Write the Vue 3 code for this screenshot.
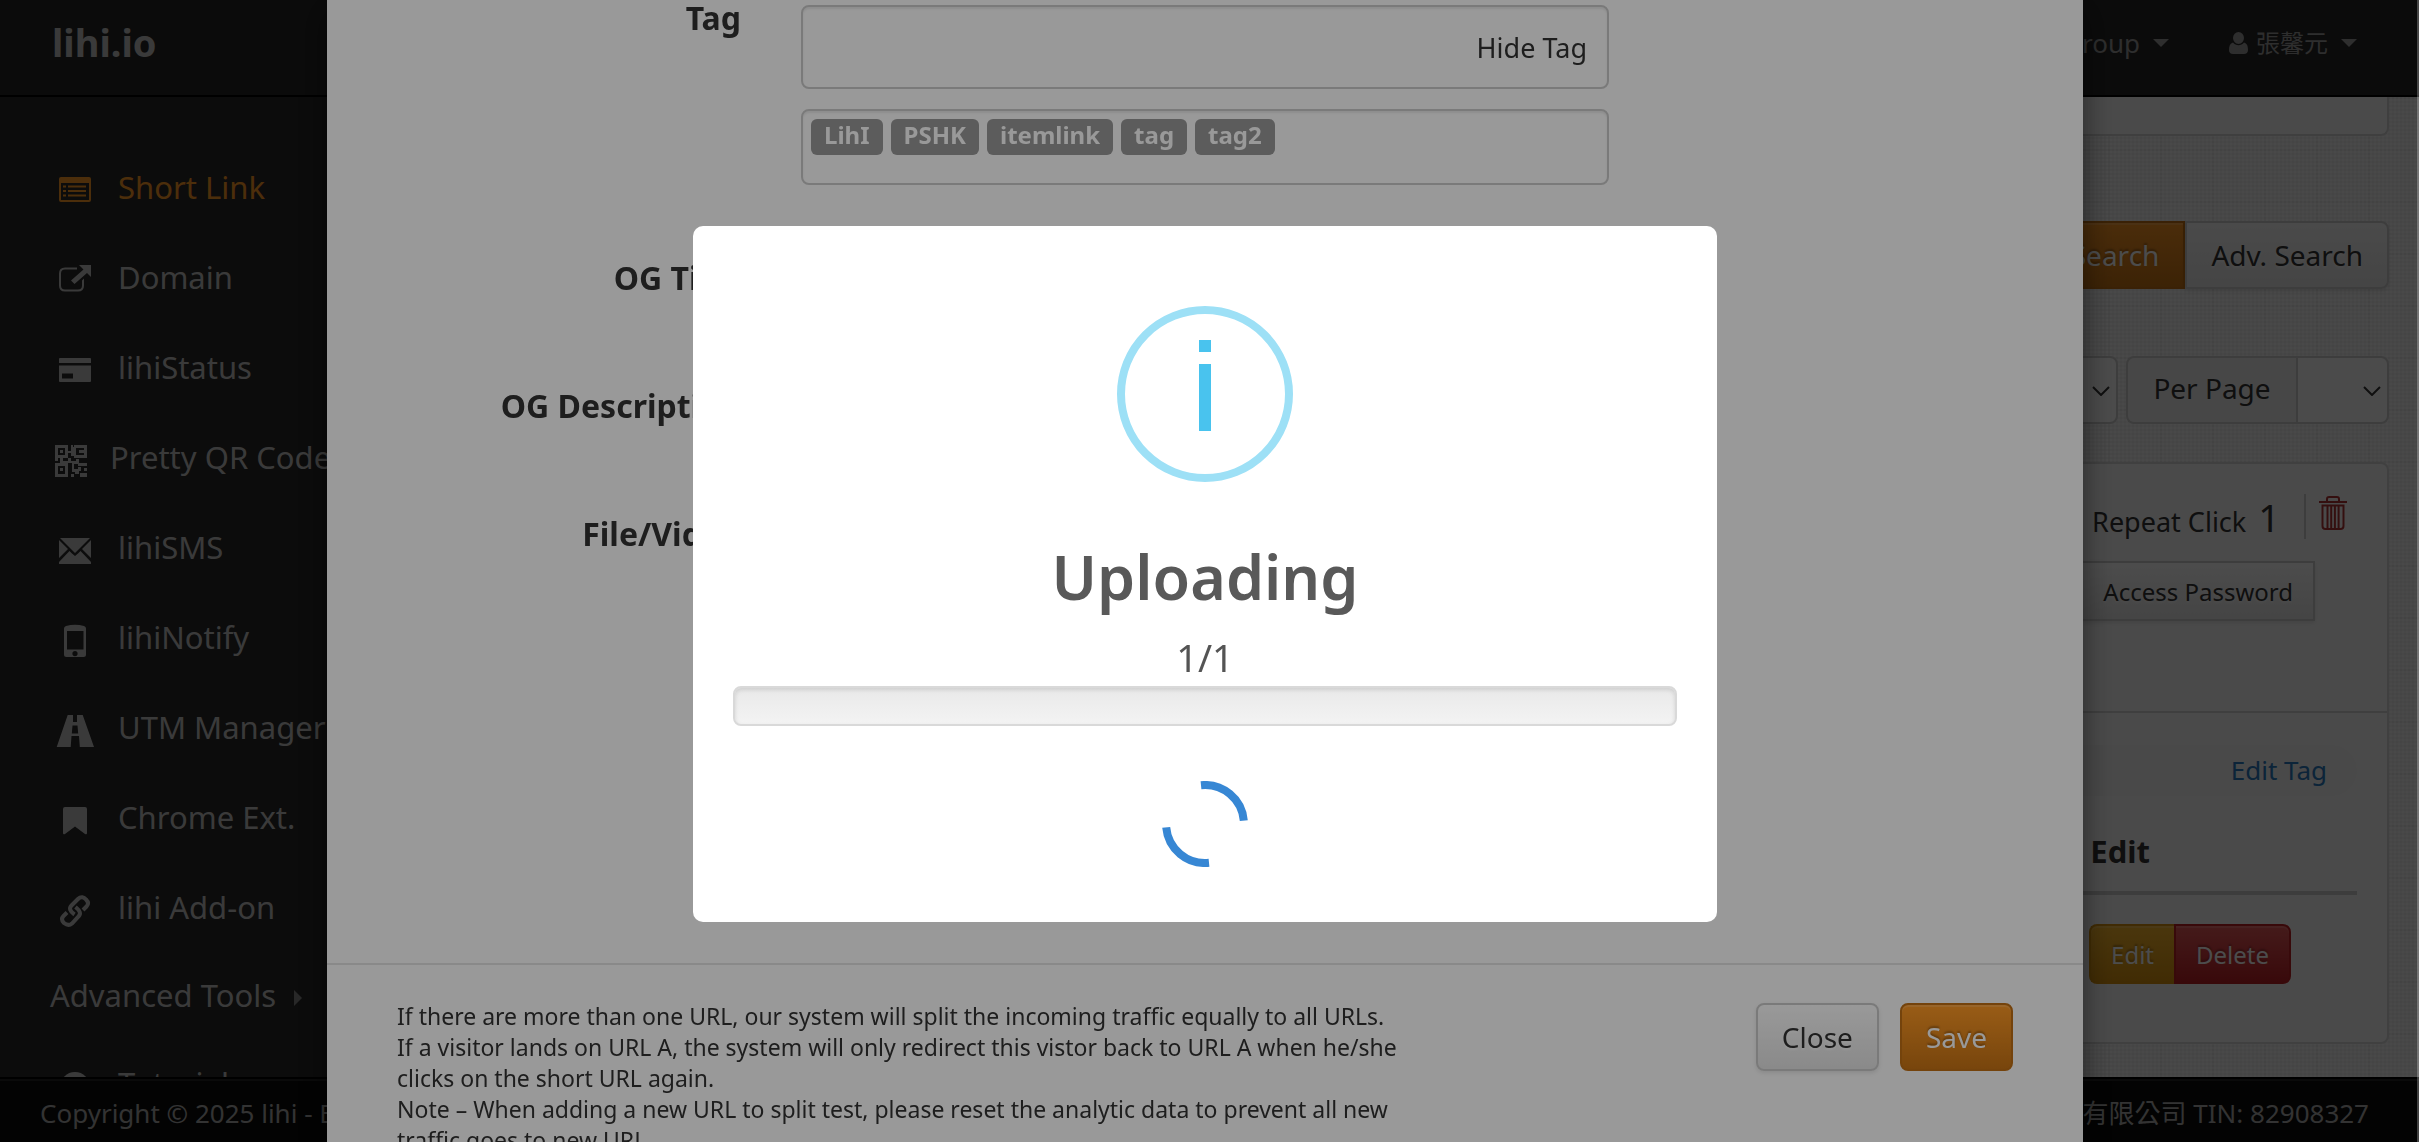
<template>
  <div class="page">
    <header class="topbar">
      <a class="brand" href="#">lihi.io</a>
      <nav class="topnav">
        <a href="#">Group <span class="caret"></span></a>
        <a href="#">
          <svg class="user-icon" viewBox="0 0 19 22"><path d="M9.500 0a5.500 6 0 0 1 0 12a5.500 6 0 0 1 0-12zM4 10.500c1.500 2 3.500 2.700 5.500 2.700s4-.7 5.500-2.700c3 .8 4 3.500 4 7.500c0 2.500-1.500 4-4 4H4c-2.500 0-4-1.500-4-4c0-4 1-6.700 4-7.500z" /></svg>
          張馨元 <span class="caret"></span>
        </a>
      </nav>
    </header>

    <div class="body">
      <aside class="sidebar">
        <a v-for="item in menu" :key="item.name" href="#" class="menu-item" :class="{ active: item.active, wide: item.icon === 'qr' }">
          <span class="menu-icon">
            <svg viewBox="0 0 32 32" width="32" height="32" :class="{ outline: item.icon === 'link' }">
              <path :d="icons[item.icon]" fill-rule="evenodd" />
            </svg>
          </span>
          {{ item.name }}
        </a>
        <a href="#" class="menu-group">Advanced Tools <span class="arrow"></span></a>
        <a href="#" class="menu-item tutorial">
          <span class="menu-icon">
            <svg viewBox="0 0 32 32" width="32" height="32"><circle cx="16" cy="18" r="15" /></svg>
          </span>
          Tutorial
        </a>
      </aside>

      <main class="content">
        <div class="panel-end"></div>
        <div class="search-row">
          <button type="button" class="btn btn-orange">Search</button>
          <button type="button" class="btn btn-right">Adv. Search</button>
        </div>
        <div class="filter-row">
          <div class="select-box">
            <select aria-label="Order"><option></option></select>
            <svg class="chevron" viewBox="0 0 18 10"><path d="M1 1l8 8l8-8" /></svg>
          </div>
          <div class="per-page">
            <label for="perPage">Per Page</label>
            <div class="select-box">
              <select id="perPage"><option></option></select>
              <svg class="chevron" viewBox="0 0 18 10"><path d="M1 1l8 8l8-8" /></svg>
            </div>
          </div>
        </div>
        <section class="card">
          <div class="card-head">
            <div class="clicks">
              <span>Repeat Click</span>
              <span class="count">1</span>
              <button type="button" class="trash" aria-label="Delete link">
                <svg viewBox="0 0 28 34" width="28" height="34">
                  <path d="M0 6h28M8 6V3q0-2 2-2h8q2 0 2 2v3M3.500 9.500h21V30q0 3-3 3h-15q-3 0-3-3zM8.500 10v22M12.200 10v22M15.900 10v22M19.600 10v22" />
                </svg>
              </button>
            </div>
            <button type="button" class="btn btn-small btn-square">Access Password</button>
          </div>
          <div class="card-body">
            <div class="tag-bar"><a href="#">Edit Tag</a></div>
            <h4>Edit</h4>
            <div class="actions">
              <button type="button" class="btn btn-small btn-yellow">Edit</button>
              <button type="button" class="btn btn-small btn-red">Delete</button>
            </div>
          </div>
        </section>
      </main>
    </div>

    <footer class="footer">
      <span>Copyright © 2025 lihi - B</span>
      <span>份有限公司 TIN: 82908327</span>
    </footer>

    <div class="backdrop"></div>

    <!-- link form -->
    <div class="layer">
      <div class="modal">
        <div class="form">
          <div class="form-row tag-row">
            <label for="tags">Tag</label>
            <div class="field">
              <div class="tag-input">
                <input id="tags" type="text" />
                <button type="button" class="hide-tag">Hide Tag</button>
              </div>
              <div class="tag-list">
                <span v-for="tag in tags" :key="tag" class="tag">{{ tag }}</span>
              </div>
            </div>
          </div>
          <div v-for="label in labels" :key="label" class="form-row">
            <span class="label">{{ label }}</span>
          </div>
        </div>
        <div class="modal-footer">
          <p>
            If there are more than one URL, our system will split the incoming traffic equally to all URLs.<br />
            If a visitor lands on URL A, the system will only redirect this vistor back to URL A when he/she<br />
            clicks on the short URL again.<br />
            Note – When adding a new URL to split test, please reset the analytic data to prevent all new<br />
            traffic goes to new URL.
          </p>
          <div class="modal-buttons">
            <button type="button" class="btn">Close</button>
            <button type="button" class="btn btn-orange">Save</button>
          </div>
        </div>
      </div>
    </div>

    <!-- upload progress -->
    <div class="layer dim">
      <div class="alert" role="dialog" aria-labelledby="alertTitle">
        <svg class="info" viewBox="0 0 176 176">
          <circle cx="88" cy="88" r="84" />
          <path d="M82 34h12v12H82zM82 58h12v67H82z" />
        </svg>
        <h2 id="alertTitle">Uploading</h2>
        <div class="progress-text">{{ done }}/{{ total }}</div>
        <div class="progress"></div>
        <svg class="spinner" viewBox="0 0 86 86">
          <path d="M39 4.200A39 39 0 0 1 81.800 39.600M47 81.800A39 39 0 0 1 4.200 46.400" />
        </svg>
      </div>
    </div>
  </div>
</template>

<script setup>
import { ref } from 'vue'

const done = ref(1)
const total = ref(1)

const tags = ref(['LihI', 'PSHK', 'itemlink', 'tag', 'tag2'])
const labels = ['OG Title', 'OG Description', 'File/Video']

const menu = [
  { name: 'Short Link', icon: 'list', active: true },
  { name: 'Domain', icon: 'share' },
  { name: 'lihiStatus', icon: 'card' },
  { name: 'Pretty QR Code', icon: 'qr' },
  { name: 'lihiSMS', icon: 'mail' },
  { name: 'lihiNotify', icon: 'phone' },
  { name: 'UTM Manager', icon: 'road' },
  { name: 'Chrome Ext.', icon: 'bookmark' },
  { name: 'lihi Add-on', icon: 'link' },
]

const icons = {
  list: 'M2 4h28q2 0 2 2v21q0 2-2 2H2q-2 0-2-2V6q0-2 2-2zM2 10v17h28V10zM4 12.500h3v2H4zM9 12.500h18v2H9zM4 17h3v2H4zM9 17h18v2H9zM4 21.500h3v2H4zM9 21.500h18v2H9z',
  share: 'M20 2h12v12l-4-4L15.500 21l-3.500-3.500L24.500 6.500zM6 4.500h12v2H6q-4 0-4 4v12q0 4 4 4h13q4 0 4-4v-5l2-2v7q0 6-6 6H6q-6 0-6-6v-12q0-6 6-6z',
  card: 'M1 5h30q1 0 1 1v4H0V6q0-1 1-1zM0 12.500h32v15.500q0 1-1 1H1q-1 0-1-1zM3 20.500v5h11v-5z',
  qr: 'M0 2h13v13H3v3H0zM3 5v7h7V5zM5 7h3v3H5zM16 2h2v2h1V2h13v13H19v-2h-3v-3h-3V8h3zM21 5v7h8V5zM24 7h5v3h-5zM0 20h13v14H0zM3 23v8h7v-8zM5 25h3v3H5zM5 15h3v3h5v-3h3v3h5v-2h3v4h8v3h-9v-2h-4v5h4v-2h3v4h-2v3h-4v-2h-3v-9H5zM29 25h3v3h-3zM25 30h7v4h-7zM16 31h3v3h-3z',
  mail: 'M1 5h30L16 20zM0 7l9 9l-9 9zM32 7l-9 9l9 9zM10.500 18L13 20.500l3 2.500l3-2.500l2.500-2.500L32 29v2H0v-2z',
  phone: 'M7 3q9-2.500 18 0q2 .5 2 2.500v26q0 2.500-2.500 2.500h-17Q5 34 5 31.500v-26Q5 3.500 7 3zM8 8v18.500h16.500V8zM16 28a2.600 2.600 0 0 0 0 5.200a2.600 2.600 0 0 0 0-5.200z',
  road: 'M8.700 2h5.300v7h4V2h5.700l11.300 32h-14.200l-.8-11h-7.500l-.8 11H-2.300zM13.500 12.500l-.7 8h6.400l-.7-8z',
  bookmark: 'M6 4h20q2 0 2 2v24q0 2-2 1L16 23.500L6 31q-2 1-2-1V6q0-2 2-2z',
  link: 'M15.500 21.500C10.500 18 10 15 12.500 12.500L19 6C22 3 25 4 27 6.500C29.500 9 29.500 11.500 27.500 13.500L24 17M16.500 14C21.500 18 22 21 19.500 23.500L13 30.500C10 33 7.500 32 5 30C2.500 27.500 2.500 25 4.500 23L8 19.500',
}
</script>

<style>
body {
  margin: 0;
  overflow: hidden;
}
</style>

<style scoped>
* {
  box-sizing: border-box;
}

.page {
  display: flex;
  flex-direction: column;
  height: 100vh;
  overflow: hidden;
  background: #f4f4f4;
  color: #333;
  font-family: "Noto Sans", "Noto Sans CJK TC", sans-serif;
  font-size: 28px;
}

a {
  color: inherit;
  text-decoration: none;
  white-space: nowrap;
}

button,
input,
select {
  font: inherit;
  color: inherit;
}

/* top bar */
.topbar {
  display: flex;
  flex: none;
  justify-content: space-between;
  height: 97px;
  padding: 0 62px 0 52px;
  background: #262626;
  border-bottom: 2px solid #000;
  color: #c4c4c4;
}

.brand {
  font-size: 38px;
  font-weight: bold;
  line-height: 84px;
}

.topnav {
  display: flex;
  gap: 60px;
  line-height: 86px;
  color: #999;
}

.topnav a {
  display: flex;
  align-items: center;
  gap: 8px;
  height: 86px;
  font-size: 24px;
}

.topnav a:first-child {
  font-size: 26px;
}

.user-icon {
  width: 19px;
  height: 22px;
  fill: currentColor;
}

.caret {
  margin-left: 5px;
  border: 8px solid transparent;
  border-top-color: currentColor;
  border-bottom: 0;
}

/* side menu */
.body {
  display: flex;
  flex: 1;
  min-height: 0;
}

.sidebar {
  flex: none;
  width: 340px;
  padding: 45px 0 0 50px;
  background: #282828;
  color: #c4c4c4;
  font-size: 31px;
  overflow: hidden;
}

.menu-item {
  display: flex;
  align-items: center;
  gap: 18px;
  height: 90px;
}

.menu-item.active {
  color: #ff9b26;
}

.menu-item.wide {
  gap: 10px;
}

.menu-icon {
  display: flex;
  justify-content: center;
  width: 50px;
  padding-top: 4px;
}

.wide .menu-icon {
  justify-content: flex-start;
  padding-left: 5px;
}

.menu-icon svg {
  fill: currentColor;
  overflow: visible;
}

.menu-icon svg.outline {
  fill: none;
  stroke: currentColor;
  stroke-width: 4;
}

.menu-group {
  display: flex;
  align-items: center;
  gap: 18px;
  height: 86px;
}

.arrow {
  margin-top: 6px;
  border: 8px solid transparent;
  border-left-color: #888;
  border-right: 0;
}

/* content */
.content {
  display: flex;
  flex: 1;
  flex-direction: column;
  min-width: 0;
  padding: 0 30px;
  background-color: #f6f6f6;
  background-image:
    linear-gradient(rgba(0, 0, 0, 0.02) 2px, transparent 2px),
    linear-gradient(90deg, rgba(0, 0, 0, 0.02) 2px, transparent 2px),
    linear-gradient(rgba(0, 0, 0, 0.03) 2px, transparent 2px),
    linear-gradient(90deg, rgba(0, 0, 0, 0.03) 2px, transparent 2px);
  background-size: 52px 52px, 52px 52px, 4px 4px, 4px 4px;
}

.panel-end {
  height: 39px;
  background: #f8f8f8;
  border: 2px solid #d4d4d4;
  border-top: 0;
  border-radius: 0 0 8px 8px;
}

.search-row {
  display: flex;
  justify-content: flex-end;
  margin-top: 85px;
}

.btn {
  height: 68px;
  padding: 0 24px;
  border: 2px solid #ccc;
  border-radius: 8px;
  background: linear-gradient(#fff, #e6e6e6);
  box-shadow: 0 2px 4px rgba(0, 0, 0, 0.1);
  font-size: 28px;
  text-shadow: 0 2px 2px rgba(255, 255, 255, 0.75);
  white-space: nowrap;
}

.btn-orange,
.btn-yellow,
.btn-red {
  color: #fff;
  text-shadow: 0 -2px 2px rgba(0, 0, 0, 0.3);
  box-shadow: inset 0 2px 0 rgba(255, 255, 255, 0.15);
}

.btn-orange {
  border-color: #c27014;
  background: linear-gradient(#ff9a26, #c87415);
}

.search-row .btn {
  background: linear-gradient(#f8f8f8, #e6e6e6);
}

.search-row .btn-orange {
  border-radius: 0;
  background: linear-gradient(#f99524, #c87415);
}

.search-row .btn-right {
  border-radius: 0 8px 8px 0;
}

.btn-small {
  height: 60px;
  padding: 0 20px;
  font-size: 24px;
}

.btn-square {
  border-radius: 0;
}

.btn-yellow {
  border-color: #d8920f;
  border-right: 0;
  border-radius: 8px 0 0 8px;
  background: linear-gradient(#f8b62c, #d8920f);
}

.btn-red {
  border-color: #bd1f24;
  border-radius: 0 8px 8px 0;
  background: linear-gradient(#e65a5a, #bd1f24);
}

.filter-row {
  display: flex;
  justify-content: flex-end;
  gap: 8px;
  margin-top: 67px;
}

.select-box {
  position: relative;
  width: 140px;
  height: 68px;
  background: #fcfcfc;
  border: 2px solid #ccc;
  border-radius: 8px;
}

.select-box select {
  width: 100%;
  height: 100%;
  appearance: none;
  background: none;
  border: 0;
}

.chevron {
  position: absolute;
  right: 6px;
  top: 28px;
  width: 18px;
  height: 10px;
  fill: none;
  stroke: #333;
  stroke-width: 2;
  pointer-events: none;
}

.per-page {
  display: flex;
}

.per-page label {
  width: 170px;
  background: #ededed;
  border: 2px solid #ccc;
  border-right: 0;
  border-radius: 8px 0 0 8px;
  line-height: 60px;
  text-align: center;
}

.per-page .select-box {
  width: 93px;
  border-radius: 0 8px 8px 0;
}

.card {
  height: 582px;
  margin-top: 38px;
  background: #f9f9f9;
  border: 2px solid #d6d6d6;
  border-radius: 8px;
}

.card-head {
  display: flex;
  flex-direction: column;
  align-items: flex-end;
  height: 249px;
  padding: 30px 40px 0 0;
  border-bottom: 2px solid #d4d4d4;
}

.clicks {
  display: flex;
  align-items: baseline;
  gap: 12px;
  height: 67px;
  font-size: 27px;
  line-height: 46px;
}

.count {
  font-size: 38px;
}

.trash {
  align-self: flex-start;
  height: 45px;
  margin-left: 12px;
  padding: 0 0 8px 13px;
  background: none;
  border: 0;
  border-left: 2px solid #ccc;
}

.trash svg {
  display: block;
  fill: none;
  stroke: #b03434;
  stroke-width: 2;
}

.card-head .btn {
  margin-right: 32px;
}

.card-body {
  padding: 32px 30px 0;
}

.tag-bar {
  height: 51px;
  padding-right: 30px;
  border-radius: 26px;
  background: #f5f5f5;
  color: #2a7abf;
  font-size: 26px;
  line-height: 51px;
  text-align: right;
}

.card-body h4 {
  height: 99px;
  margin: 0;
  padding: 34px 207px 0 0;
  border-bottom: 4px solid #ccc;
  font-size: 31px;
  line-height: 42px;
  text-align: right;
}

.actions {
  display: flex;
  justify-content: flex-end;
  padding: 29px 66px 0 0;
}

/* footer */
.footer {
  display: flex;
  flex: none;
  justify-content: space-between;
  height: 65px;
  padding: 0 50px 0 40px;
  background: #0a0a0a;
  border-top: 2px solid #000;
  box-shadow: inset 0 2px 0 #222;
  color: #aaa;
  font-size: 26px;
  line-height: 68px;
  white-space: nowrap;
}

/* overlays */
.backdrop,
.layer {
  position: fixed;
  inset: 0;
}

.backdrop {
  background: rgba(0, 0, 0, 0.5);
}

.layer {
  display: flex;
  justify-content: center;
  padding-right: 9px;
  overflow: hidden;
}

.dim {
  align-items: center;
  padding-right: 7px;
  border-right: 2px solid rgba(255, 255, 255, 0.25);
  background: rgba(0, 0, 0, 0.4);
}

.modal {
  display: flex;
  flex-direction: column;
  width: 1756px;
  height: 1300px;
  background: #fff;
  box-shadow: 0 10px 30px rgba(0, 0, 0, 0.5);
}

.form {
  height: 965px;
  padding-top: 5px;
  border-bottom: 2px solid #e5e5e5;
}

.form-row {
  display: flex;
  gap: 60px;
  height: 128px;
}

.tag-row {
  height: 239px;
}

.form-row > label,
.form-row > .label {
  width: 414px;
  margin-top: 14px;
  font-size: 32px;
  font-weight: bold;
  line-height: 40px;
  text-align: right;
}

.tag-row > label {
  margin-top: -7px;
}

.field {
  display: flex;
  flex-direction: column;
  gap: 20px;
  width: 808px;
}

.tag-input,
.tag-list {
  display: flex;
  border: 2px solid #ccc;
  border-radius: 8px;
  box-shadow: inset 0 2px 2px rgba(0, 0, 0, 0.075);
}

.tag-input {
  height: 84px;
  padding-right: 20px;
}

.tag-input input {
  flex: 1;
  min-width: 0;
  border: 0;
  background: none;
}

.hide-tag {
  padding: 0;
  background: none;
  border: 0;
  font-size: 27px;
}

.tag-list {
  align-items: flex-start;
  gap: 8px;
  height: 76px;
  padding: 8px;
}

.tag {
  height: 36px;
  padding: 0 13px;
  border-radius: 6px;
  background: #999;
  color: #fff;
  font-size: 24px;
  font-weight: bold;
  line-height: 31px;
}

.modal-footer {
  display: flex;
  justify-content: space-between;
  padding: 38px 70px 0;
}

.modal-footer p {
  margin: -2px 0 0;
  font-size: 23px;
  line-height: 31px;
  white-space: nowrap;
}

.modal-buttons {
  display: flex;
  gap: 21px;
}

.alert {
  display: flex;
  flex-direction: column;
  align-items: center;
  width: 1024px;
  height: 696px;
  margin-top: 6px;
  padding: 80px 40px 0;
  border-radius: 10px;
  background: #fff;
}

.info {
  width: 176px;
  height: 176px;
  fill: none;
}

.info circle {
  stroke: #9de0f6;
  stroke-width: 8;
}

.info path {
  fill: #49c3ee;
}

.alert h2 {
  margin: 51px 0 0;
  color: #595959;
  font-size: 61px;
  font-weight: 600;
  line-height: 88px;
}

.progress-text {
  margin-top: 10px;
  color: #545454;
  font-size: 38px;
  line-height: 52px;
}

.progress {
  width: 100%;
  height: 40px;
  margin-top: 3px;
  border: 2px solid #d9d9d9;
  border-radius: 8px;
  background: linear-gradient(#e9e9e9, #f3f3f3);
  box-shadow: inset 0 2px 4px rgba(0, 0, 0, 0.12);
}

.spinner {
  width: 86px;
  height: 86px;
  margin-top: 55px;
  fill: none;
  stroke: #3787d4;
  stroke-width: 8;
}
</style>
